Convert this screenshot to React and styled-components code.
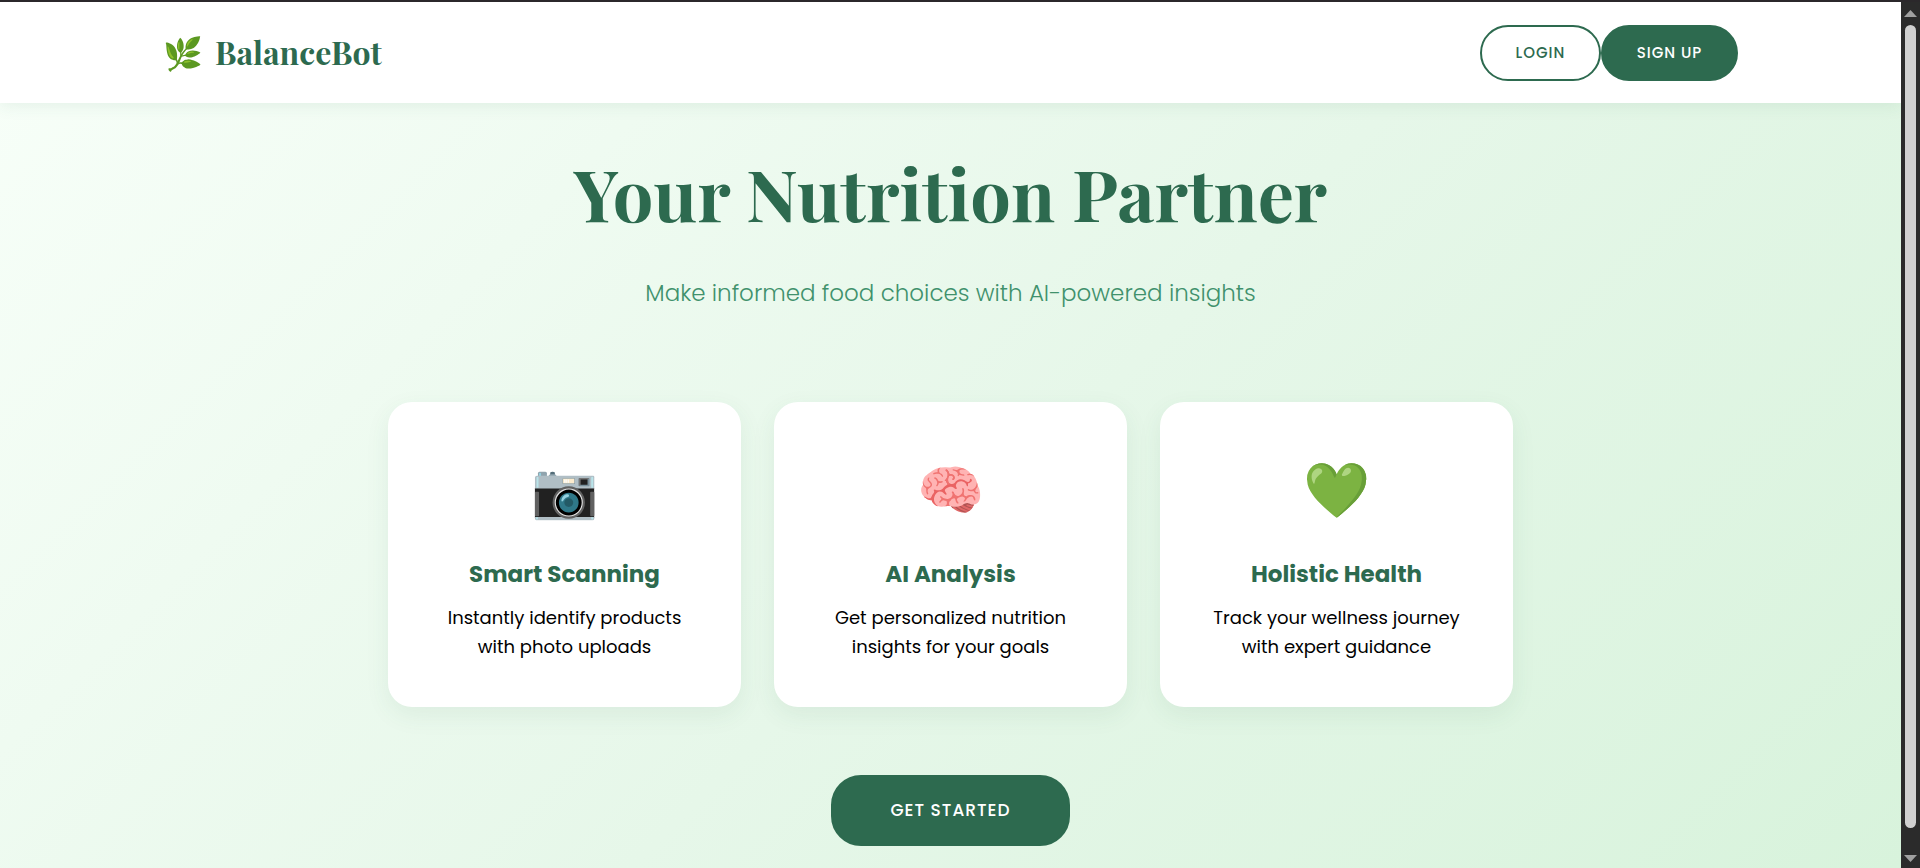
import React from 'react'
import styled, { createGlobalStyle } from 'styled-components'

const GlobalStyle = createGlobalStyle`
  * {
    box-sizing: border-box;
    margin: 0;
    padding: 0;
  }
  body {
    font-family: Poppins, Inter, sans-serif;
    background: #2b2b2b;
    color: #000;
  }
`

const Window = styled.div`
  display: flex;
  height: 100vh;
  border-top: 2px solid #2b282b;
`

const Page = styled.div`
  flex: 1;
  display: flex;
  flex-direction: column;
  overflow: hidden;
  background: linear-gradient(135deg, #f8fff9 0%, #e6f7e9 54%, #d8f3dc 100%);
`

const Nav = styled.nav`
  flex: none;
  background: #fff;
  box-shadow: 0 2px 16px rgba(45, 106, 79, 0.1);
`

const NavInner = styled.div`
  width: 83%;
  max-width: 1575px;
  margin: 0 auto;
  padding: 23px 0 22px;
  display: flex;
  align-items: center;
  justify-content: space-between;
`

const Logo = styled.a`
  display: flex;
  align-items: center;
  gap: 12px;
  padding-bottom: 2px;
  color: #2d6a4f;
  font-family: "Playfair Display", "Liberation Serif", serif;
  font-size: 32px;
  font-weight: 700;
  line-height: 48px;
  text-decoration: none;
`

const NavButtons = styled.div`
  display: flex;
`

const Button = styled.button`
  min-width: ${(props) => props.$width};
  height: ${(props) => props.$height || '56px'};
  padding-bottom: 2px;
  border: 2px solid #2d6a4f;
  border-radius: 30px;
  background: ${(props) => (props.$outline ? 'transparent' : '#2d6a4f')};
  color: ${(props) => (props.$outline ? '#2d6a4f' : '#fff')};
  font-family: inherit;
  font-size: ${(props) => props.$size || '15px'};
  font-weight: 500;
  letter-spacing: 1px;
  cursor: pointer;
`

const Hero = styled.main`
  flex: 1;
  display: flex;
  flex-direction: column;
  align-items: center;
  padding: 41px 32px 0;
  text-align: center;
`

const Title = styled.h1`
  color: #2d6a4f;
  font-family: "Playfair Display", "Liberation Serif", serif;
  font-size: 72px;
  font-weight: 700;
  line-height: 96px;
`

const Subtitle = styled.p`
  margin-top: 33px;
  color: #40916c;
  font-size: 23px;
  font-weight: 300;
  line-height: 40px;
`

const Cards = styled.section`
  width: 100%;
  max-width: 1125px;
  margin-top: 89px;
  display: grid;
  grid-template-columns: repeat(3, 1fr);
  gap: 33px;
`

const Card = styled.article`
  display: flex;
  flex-direction: column;
  align-items: center;
  padding: 56px 40px 46px;
  border-radius: 24px;
  background: #fff;
  box-shadow: 0 8px 24px rgba(45, 106, 79, 0.08);
`

const CardIcon = styled.div`
  font-size: 54px;
  line-height: 64px;
`

const CardTitle = styled.h3`
  margin-top: 32px;
  color: #2d6a4f;
  font-size: 23px;
  font-weight: 700;
  line-height: 40px;
`

const CardText = styled.p`
  margin-top: 9px;
  max-width: 250px;
  font-size: 18px;
  line-height: 29px;
`

const Action = styled.div`
  margin-top: 68px;
`

const Scrollbar = styled.div`
  width: 19px;
  display: flex;
  flex-direction: column;
  align-items: center;
  padding: 8px 0 6px;
  background: #2b2b2b;
`

const Thumb = styled.div`
  flex: 1;
  width: 11px;
  margin: 8px 0 27px;
  border-radius: 6px;
  background: #d0d0d0;
`

const features = [
  { icon: '📷', title: 'Smart Scanning', text: 'Instantly identify products with photo uploads' },
  { icon: '🧠', title: 'AI Analysis', text: 'Get personalized nutrition insights for your goals' },
  { icon: '💚', title: 'Holistic Health', text: 'Track your wellness journey with expert guidance' },
]

const App = () => {
  return (
    <>
      <GlobalStyle />
      <Window>
        <Page>
          <Nav>
            <NavInner>
              <Logo href="#"><span>🌿</span>BalanceBot</Logo>
              <NavButtons>
                <Button $outline $width="121px">LOGIN</Button>
                <Button $width="137px">SIGN UP</Button>
              </NavButtons>
            </NavInner>
          </Nav>
          <Hero>
            <Title>Your Nutrition Partner</Title>
            <Subtitle>Make informed food choices with AI-powered insights</Subtitle>
            <Cards>
              {features.map((item) => (
                <Card key={item.title}>
                  <CardIcon>{item.icon}</CardIcon>
                  <CardTitle>{item.title}</CardTitle>
                  <CardText>{item.text}</CardText>
                </Card>
              ))}
            </Cards>
            <Action>
              <Button $width="239px" $height="71px" $size="17px">GET STARTED</Button>
            </Action>
          </Hero>
        </Page>
        <Scrollbar aria-hidden="true">
          <svg width="13" height="7" viewBox="0 0 13 7"><path d="M6.5 0 13 7H0z" fill="#a0a0a0" /></svg>
          <Thumb />
          <svg width="13" height="7" viewBox="0 0 13 7"><path d="M0 0h13L6.5 7z" fill="#a0a0a0" /></svg>
        </Scrollbar>
      </Window>
    </>
  )
}

export default App
